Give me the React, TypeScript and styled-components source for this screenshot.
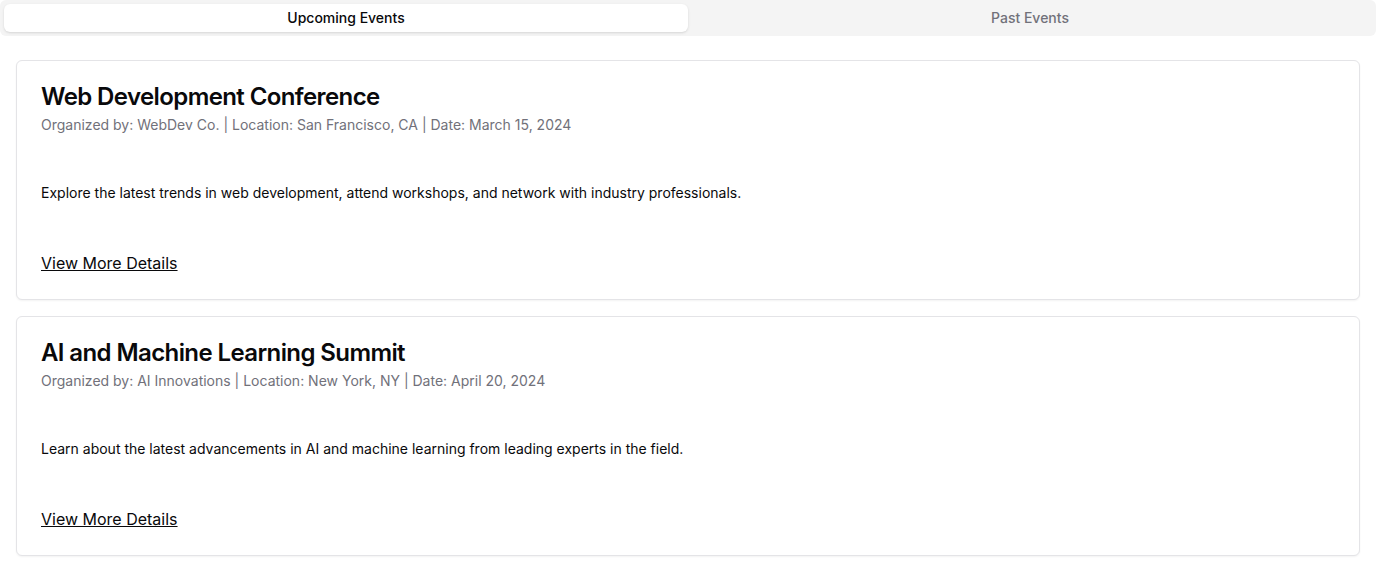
import React, { useState } from "react";
import styled, { createGlobalStyle } from "styled-components";

const GlobalStyle = createGlobalStyle`
  *, *::before, *::after { box-sizing: border-box; }
  body {
    margin: 0;
    background: #ffffff;
    color: #09090b;
    font-family: Inter, "Liberation Sans", sans-serif;
    font-size: 16px;
    line-height: 24px;
  }
`;

const TabList = styled.div`
  display: grid;
  grid-template-columns: 1fr 1fr;
  padding: 4px;
  border-radius: 6px;
  background: #f4f4f4;
`;

const Tab = styled.button<{ $active: boolean }>`
  padding: 4px 12px;
  border: 0;
  border-radius: 6px;
  background: ${(p) => (p.$active ? "#ffffff" : "transparent")};
  color: ${(p) => (p.$active ? "#09090b" : "#71717a")};
  box-shadow: ${(p) =>
    p.$active ? "0 1px 3px rgba(0, 0, 0, 0.1), 0 1px 2px -1px rgba(0, 0, 0, 0.1)" : "none"};
  font-family: inherit;
  font-size: 14px;
  font-weight: 500;
  line-height: 20px;
  cursor: pointer;
`;

const Panel = styled.div`
  display: grid;
  gap: 16px;
  margin-top: 8px;
  padding: 16px;
`;

const Card = styled.article`
  border: 1px solid #e4e4e7;
  border-radius: 6px;
  background: #ffffff;
  box-shadow: 0 1px 2px rgba(0, 0, 0, 0.05);
`;

const CardHeader = styled.header`
  display: flex;
  flex-direction: column;
  gap: 6px;
  padding: 24px;
`;

const Title = styled.h3`
  margin: 0;
  font-size: 24px;
  font-weight: 600;
  line-height: 24px;
  letter-spacing: -0.025em;
`;

const Meta = styled.p`
  margin: 0;
  color: #71717a;
  font-size: 14px;
  line-height: 20px;
`;

const Description = styled.p`
  margin: 0;
  padding: 24px;
  font-size: 14px;
  line-height: 20px;
`;

const CardFooter = styled.footer`
  display: flex;
  padding: 24px;
`;

const DetailsLink = styled.a`
  color: inherit;
  text-decoration: underline;
`;

interface EventInfo {
  title: string;
  meta: string;
  description: string;
}

const upcoming: EventInfo[] = [
  {
    title: "Web Development Conference",
    meta: "Organized by: WebDev Co. | Location: San Francisco, CA | Date: March 15, 2024",
    description:
      "Explore the latest trends in web development, attend workshops, and network with industry professionals.",
  },
  {
    title: "AI and Machine Learning Summit",
    meta: "Organized by: AI Innovations | Location: New York, NY | Date: April 20, 2024",
    description:
      "Learn about the latest advancements in AI and machine learning from leading experts in the field.",
  },
];

const tabs = [
  { id: "upcoming", label: "Upcoming Events", events: upcoming },
  { id: "past", label: "Past Events", events: [] as EventInfo[] },
];

export default function App() {
  const [active, setActive] = useState("upcoming");
  const current = tabs.find((t) => t.id === active) ?? tabs[0];

  return (
    <>
      <GlobalStyle />
      <main>
        <TabList role="tablist">
          {tabs.map((t) => (
            <Tab
              key={t.id}
              id={`tab-${t.id}`}
              type="button"
              role="tab"
              aria-selected={t.id === active}
              aria-controls="events-panel"
              $active={t.id === active}
              onClick={() => setActive(t.id)}
            >
              {t.label}
            </Tab>
          ))}
        </TabList>
        <Panel id="events-panel" role="tabpanel" aria-labelledby={`tab-${active}`}>
          {current.events.map((e) => (
            <Card key={e.title}>
              <CardHeader>
                <Title>{e.title}</Title>
                <Meta>{e.meta}</Meta>
              </CardHeader>
              <Description>{e.description}</Description>
              <CardFooter>
                <DetailsLink href="#">View More Details</DetailsLink>
              </CardFooter>
            </Card>
          ))}
        </Panel>
      </main>
    </>
  );
}
